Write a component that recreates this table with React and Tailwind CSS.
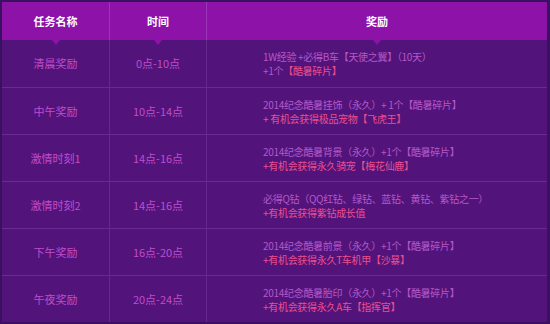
import React from "react";

const rows = [
  {
    name: "清晨奖励",
    time: "0点-10点",
    l1: [["p", "1W经验 +必得B车【天使之翼】（10天）"]],
    l2: [["p", "+1个"], ["k", "【酷暑碎片】"]],
  },
  {
    name: "中午奖励",
    time: "10点-14点",
    l1: [["p", "2014纪念酷暑挂饰（永久）+ 1个【酷暑碎片】"]],
    l2: [["k", "+ 有机会获得极品宠物【飞虎王】"]],
  },
  {
    name: "激情时刻1",
    time: "14点-16点",
    l1: [["p", "2014纪念酷暑背景（永久）+1个【酷暑碎片】"]],
    l2: [["k", "+有机会获得永久骑宠【梅花仙鹿】"]],
  },
  {
    name: "激情时刻2",
    time: "14点-16点",
    l1: [["p", "必得Q钻（QQ红钻、绿钻、蓝钻、黄钻、紫钻之一）"]],
    l2: [["k", "+有机会获得紫钻成长值"]],
  },
  {
    name: "下午奖励",
    time: "16点-20点",
    l1: [["p", "2014纪念酷暑前景（永久）+1个【酷暑碎片】"]],
    l2: [["k", "+有机会获得永久T车机甲【沙暴】"]],
  },
  {
    name: "午夜奖励",
    time: "20点-24点",
    l1: [["p", "2014纪念酷暑胎印（永久）+1个【酷暑碎片】"]],
    l2: [["k", "+有机会获得永久A车【指挥官】"]],
  },
];

function Seg({ parts }) {
  return (
    <div className="whitespace-nowrap h-[13px] leading-[13px]">
      {parts.map(([c, t], i) => (
        <span key={i} className={c === "k" ? "text-[#ec4f8e]" : "text-[#b558c8]"}>
          {t}
        </span>
      ))}
    </div>
  );
}

function Tri() {
  return (
    <span className="absolute left-1/2 top-full -translate-x-1/2 w-0 h-0 border-l-[4px] border-r-[4px] border-t-[5px] border-l-transparent border-r-transparent border-t-[#8c12a8] z-10" />
  );
}

export default function App() {
  return (
    <div className="w-[550px] h-[324px] bg-[#3a1160] pt-[2px] pl-[2px] font-['Noto_Sans_CJK_SC',sans-serif] overflow-hidden">
      <div className="w-[545px] h-[320px] bg-[#52147a]">
        <div className="grid grid-cols-[108px_97px_1fr] h-[38px] bg-[#8c12a8] text-white font-bold text-[11px]">
          <div className="relative flex items-center justify-center border-r border-[#9b35b6]">
            任务名称
            <Tri />
          </div>
          <div className="relative flex items-center justify-center border-r border-[#9b35b6]">
            时间
            <Tri />
          </div>
          <div className="relative flex items-center justify-center">
            奖励
            <Tri />
          </div>
        </div>
        {rows.map((r, i) => (
          <div
            key={i}
            className={`grid grid-cols-[108px_97px_1fr] h-[47px] ${i > 0 ? "border-t border-[#6a2b90]" : ""}`}
          >
            <div className="flex items-center justify-center border-r border-[#652a8c] text-[11px] text-[#c04ccb]">
              {r.name}
            </div>
            <div className="flex items-center justify-center border-r border-[#652a8c] text-[11px] text-[#c04ccb]">
              {r.time}
            </div>
            <div className="flex flex-col justify-center gap-[1px] pl-[56px] text-[10px] tracking-[-0.3px]">
              <Seg parts={r.l1} />
              <Seg parts={r.l2} />
            </div>
          </div>
        ))}
      </div>
    </div>
  );
}
